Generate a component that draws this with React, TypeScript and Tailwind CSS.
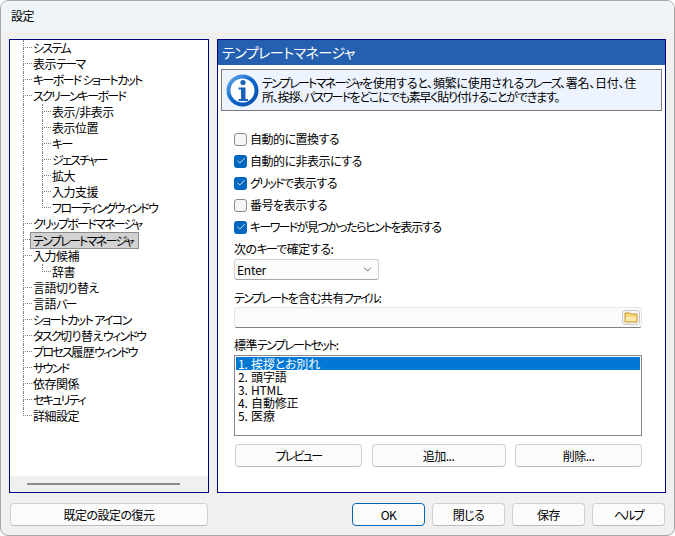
import { ChevronDown, Check } from "lucide-react";

const treeItems = [
  { label: "システム", depth: 0 },
  { label: "表示テーマ", depth: 0 },
  { label: "キーボード ショートカット", depth: 0 },
  { label: "スクリーンキーボード", depth: 0 },
  { label: "表示/非表示", depth: 1 },
  { label: "表示位置", depth: 1 },
  { label: "キー", depth: 1 },
  { label: "ジェスチャー", depth: 1 },
  { label: "拡大", depth: 1 },
  { label: "入力支援", depth: 1 },
  { label: "フローティングウィンドウ", depth: 1, last: true },
  { label: "クリップボードマネージャ", depth: 0 },
  { label: "テンプレートマネージャ", depth: 0, selected: true },
  { label: "入力候補", depth: 0 },
  { label: "辞書", depth: 1, last: true },
  { label: "言語切り替え", depth: 0 },
  { label: "言語バー", depth: 0 },
  { label: "ショートカット アイコン", depth: 0 },
  { label: "タスク切り替えウィンドウ", depth: 0 },
  { label: "プロセス履歴ウィンドウ", depth: 0 },
  { label: "サウンド", depth: 0 },
  { label: "依存関係", depth: 0 },
  { label: "セキュリティ", depth: 0 },
  { label: "詳細設定", depth: 0, last: true },
];

const options = [
  { label: "自動的に置換する", checked: false },
  { label: "自動的に非表示にする", checked: true },
  { label: "グリッドで表示する", checked: true },
  { label: "番号を表示する", checked: false },
  { label: "キーワードが見つかったらヒントを表示する", checked: true, tight: true },
];

const templateSets = ["1. 挨拶とお別れ", "2. 頭字語", "3. HTML", "4. 自動修正", "5. 医療"];

// katakana is set much narrower than kanji in the original UI font
const Jp = ({ text }: { text: string }) => (
  <>
    {text.split(/([ァ-ヶー]+)/).map((part, i) =>
      i % 2 === 1 ? (
        <span key={i} className="tracking-[-1.7px]">
          {part}
        </span>
      ) : (
        part
      )
    )}
  </>
);

const Elbow = ({ last }: { last?: boolean }) => (
  <div className="flex flex-col w-[9px] h-4 shrink-0">
    <div className="h-2 border-l border-b border-dotted border-[#808080]" />
    <div className={last ? "h-2" : "h-2 border-l border-dotted border-[#808080]"} />
  </div>
);

const TreeRow = ({ item }: { item: (typeof treeItems)[number] }) => (
  <div className="flex h-4 items-center pl-[13px]">
    {item.depth === 1 && <div className="w-[19px] h-4 shrink-0 border-l border-dotted border-[#808080]" />}
    <Elbow last={item.last} />
    <span
      className={
        item.selected
          ? "h-[17px] w-[109px] -ml-[2px] pl-[2px] shrink-0 bg-[#d2d2d2] border border-[#8c8c8c] leading-[15px] whitespace-nowrap"
          : "ml-px whitespace-nowrap leading-4"
      }
    >
      <Jp text={item.label} />
    </span>
  </div>
);

const PushButton = ({ label, className = "" }: { label: string; className?: string }) => (
  <button className={`h-[23px] rounded-[4px] border border-[#d0d0d0] border-b-[#bcbcbc] bg-[#fbfbfb] text-center leading-[20px] ${className}`}>
    <Jp text={label} />
  </button>
);

const InfoIcon = () => (
  <svg width="33" height="33" viewBox="0 0 33 33" className="shrink-0">
    <defs>
      <linearGradient id="ring" x1="0" y1="0" x2="1" y2="1">
        <stop offset="0" stopColor="#6fb2f0" />
        <stop offset="0.5" stopColor="#0a62cc" />
        <stop offset="1" stopColor="#0a4ea8" />
      </linearGradient>
    </defs>
    <circle cx="16.5" cy="16.5" r="16" fill="url(#ring)" />
    <circle cx="16.5" cy="16.5" r="12" fill="#ffffff" />
    <circle cx="17" cy="8.5" r="2.6" fill="#1a62b8" />
    <path d="M12.5 13.5h7v11.5h2.5v2h-9.5v-2h2.5v-9.5h-2.5z" fill="#1a62b8" />
  </svg>
);

const FolderIcon = () => (
  <svg width="18" height="15" viewBox="0 0 18 15" className="shrink-0">
    <rect x="0.5" y="0.5" width="17" height="14" rx="2.5" fill="#f4f4f4" stroke="#c8c8c8" />
    <path d="M3 3h5l1 1h6v8H3z" fill="#f7d77a" stroke="#cf9a2e" strokeWidth="1" />
    <path d="M4 7h10v4H4z" fill="#fbeab0" />
  </svg>
);

export default function App() {
  return (
    <div className="w-[675px] h-[536px] bg-white text-black text-xs [font-family:'Noto_Sans_CJK_JP','Liberation_Sans',sans-serif] [font-feature-settings:'palt'] tracking-[-0.5px]">
      <div className="flex flex-col h-full rounded-lg border border-[#a8a8a8] bg-[#f0f0f0] overflow-hidden">
        <div className="h-[30px] shrink-0 bg-[#eff4f9] pl-[10px] leading-[30px]">設定</div>

        <div className="flex gap-2 px-2 pt-2 h-[462px] shrink-0">
          <div className="w-[200px] flex flex-col border border-[#000080]">
            <div className="flex-1 bg-white">
              {treeItems.map((item) => (
                <TreeRow key={item.label} item={item} />
              ))}
            </div>
            <div className="h-4 flex items-center pl-[17px]">
              <div className="w-[153px] h-[2px] bg-[#8a8a8a]" />
            </div>
          </div>

          <div className="w-[449px] flex flex-col border border-[#000080] bg-white">
            <div className="h-[25px] shrink-0 bg-[#2560b0] text-white text-sm pl-1 leading-[24px]">テンプレートマネージャ</div>

            <div className="mx-[3px] mt-[4px] h-[42px] shrink-0 flex items-center gap-[3px] border border-[#7c7c7c] bg-[#edf4ff] pl-[4px]">
              <InfoIcon />
              <p className="leading-[14px] whitespace-nowrap">
                <span className="tracking-[-0.25px]">
                  <Jp text="テンプレートマネージャを使用すると、頻繁に使用されるフレーズ、署名、日付、住" />
                </span>
                <br />
                <span className="tracking-[-1.2px]">
                  <Jp text="所、挨拶、パスワードをどこにでも素早く貼り付けることができます。" />
                </span>
              </p>
            </div>

            <div className="flex flex-col px-4 pt-[17px]">
              <div className="flex flex-col">
                {options.map((o) => (
                  <label key={o.label} className="flex items-center gap-[3px] h-[22px]">
                    {o.checked ? (
                      <span className="flex items-center justify-center w-[13px] h-[13px] rounded-[3px] bg-[#0067c0]">
                        <Check size={10} strokeWidth={2} className="text-white" />
                      </span>
                    ) : (
                      <span className="w-[13px] h-[13px] rounded-[3px] border border-[#8a8a8a] bg-[#f6f6f6]" />
                    )}
                    <span className={o.tight ? "tracking-[-1.35px]" : ""}>
                      <Jp text={o.label} />
                    </span>
                  </label>
                ))}
              </div>

              <div className="leading-[16px] mt-[3px]">
                <Jp text="次のキーで確定する:" />
              </div>
              <div className="mt-[2px] w-[145px] h-[21px] flex items-center justify-between rounded-[3px] border border-[#d0d0d0] border-b-[#a8a8a8] bg-[#fbfbfb] pl-[2px] pr-1 tracking-[-0.2px]">
                Enter
                <ChevronDown size={13} strokeWidth={1.4} className="text-[#333333]" />
              </div>

              <div className="leading-[16px] mt-[10px]">
                <Jp text="テンプレートを含む共有ファイル:" />
              </div>
              <div className="mt-[1px] w-[408px] h-[21px] flex items-center justify-end rounded-[3px] border border-[#e6e6e6] border-b-[#808080] bg-[#fbfbfb] pr-[1px]">
                <FolderIcon />
              </div>

              <div className="leading-[16px] mt-[9px]">
                <Jp text="標準テンプレートセット:" />
              </div>
              <div className="mt-[2px] w-[408px] h-[81px] border border-[#858590] bg-white p-[1px] tracking-[-0.2px] [word-spacing:1px]">
                {templateSets.map((s, i) => (
                  <div
                    key={s}
                    className={i === 0 ? "h-[13px] leading-[13px] pl-[2px] bg-[#0078d4] text-white" : "h-[13px] leading-[13px] pl-[2px]"}
                  >
                    {s}
                  </div>
                ))}
              </div>

              <div className="flex mt-[8px] w-[408px] justify-between pl-px">
                <PushButton label="プレビュー" className="w-[127px]" />
                <PushButton label="追加..." className="w-[134px]" />
                <PushButton label="削除..." className="w-[127px]" />
              </div>
            </div>
          </div>
        </div>

        <div className="flex items-center px-[9px] pt-[10px]">
          <PushButton label="既定の設定の復元" className="w-[198px]" />
          <div className="flex gap-[7px] ml-auto">
            <button className="w-[73px] h-[23px] rounded-[4px] border border-[#0067c0] bg-[#fbfbfb] leading-[20px]">OK</button>
            <PushButton label="閉じる" className="w-[73px]" />
            <PushButton label="保存" className="w-[73px]" />
            <PushButton label="ヘルプ" className="w-[73px]" />
          </div>
        </div>
      </div>
    </div>
  );
}
